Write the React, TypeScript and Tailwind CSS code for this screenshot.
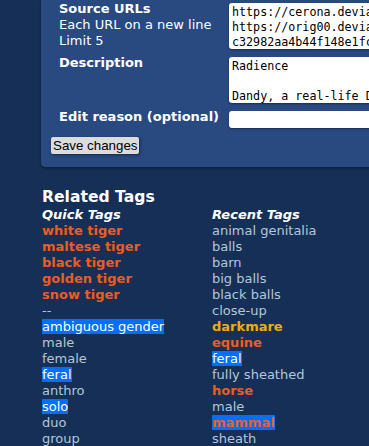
import React from "react";

type Tag = { name: string; kind: "general" | "species" | "artist"; sel?: boolean };

const quick: Tag[] = [
  { name: "white tiger", kind: "species" },
  { name: "maltese tiger", kind: "species" },
  { name: "black tiger", kind: "species" },
  { name: "golden tiger", kind: "species" },
  { name: "snow tiger", kind: "species" },
  { name: "--", kind: "general" },
  { name: "ambiguous gender", kind: "general", sel: true },
  { name: "male", kind: "general" },
  { name: "female", kind: "general" },
  { name: "feral", kind: "general", sel: true },
  { name: "anthro", kind: "general" },
  { name: "solo", kind: "general", sel: true },
  { name: "duo", kind: "general" },
  { name: "group", kind: "general" },
];

const recent: Tag[] = [
  { name: "animal genitalia", kind: "general" },
  { name: "balls", kind: "general" },
  { name: "barn", kind: "general" },
  { name: "big balls", kind: "general" },
  { name: "black balls", kind: "general" },
  { name: "close-up", kind: "general" },
  { name: "darkmare", kind: "artist" },
  { name: "equine", kind: "species" },
  { name: "feral", kind: "general", sel: true },
  { name: "fully sheathed", kind: "general" },
  { name: "horse", kind: "species" },
  { name: "male", kind: "general" },
  { name: "mammal", kind: "species", sel: true },
  { name: "sheath", kind: "general" },
];

function TagItem({ t }: { t: Tag }) {
  let cls = "";
  if (t.kind === "species") cls = "text-[#ed5d1f] font-bold";
  else if (t.kind === "artist") cls = "text-[#f2ac08] font-bold";
  else cls = t.sel ? "text-white" : "text-[#b4c7d9]";
  return (
    <div className="h-[16px] leading-[16px] whitespace-nowrap">
      <a className={`${cls} ${t.sel ? "bg-[#006ffa]" : ""} cursor-pointer`}>{t.name}</a>
    </div>
  );
}

const mono = "font-['DejaVu_Sans_Mono',monospace] text-[11.7px] leading-[15px]";

export default function App() {
  return (
    <div className="w-[369px] h-[446px] overflow-hidden bg-[#152f56] font-['DejaVu_Sans',Verdana,sans-serif] text-[13px] text-white">
      <div className="ml-[41px] w-[420px] bg-[#284a81] rounded-bl-[4px] shadow-[0_1px_3px_rgba(0,0,0,0.45)] pl-[10px] pt-[1px] pb-[11px]">
        <div className="flex items-start mb-[4px]">
          <div className="w-[178px] pl-[8px] leading-[16px]">
            <div className="font-bold">Source URLs</div>
            <div>Each URL on a new line</div>
            <div>Limit 5</div>
          </div>
          <div className="py-[2px]">
            <div className={`w-[200px] h-[46px] bg-white text-black rounded-[3px] shadow-[0_1px_2px_rgba(0,0,0,0.4)] px-[3px] pt-[2px] overflow-hidden whitespace-pre ${mono}`}>
              {"https://cerona.deviantart.com\nhttps://orig00.deviantart.net\nc32982aa4b44f148e1fc"}
            </div>
          </div>
        </div>
        <div className="flex items-start mb-[4px]">
          <div className="w-[178px] pl-[8px] leading-[16px] font-bold">Description</div>
          <div className="py-[2px]">
            <div className={`w-[200px] h-[46px] bg-white text-black rounded-[3px] shadow-[0_1px_2px_rgba(0,0,0,0.4)] px-[3px] pt-[2px] overflow-hidden whitespace-pre ${mono}`}>
              {"Radience\n\nDandy, a real-life Dandy"}
            </div>
          </div>
        </div>
        <div className="flex items-start">
          <div className="w-[178px] pl-[8px] leading-[16px] font-bold whitespace-nowrap">Edit reason (optional)</div>
          <div className="py-[2px]">
            <div className="w-[200px] h-[17px] bg-white rounded-[3px] shadow-[0_1px_2px_rgba(0,0,0,0.4)]" />
          </div>
        </div>
        <button className="mt-[7px] h-[17px] px-[2px] bg-[#dcdcdc] text-black rounded-[2px] shadow-[1px_1px_3px_rgba(0,0,0,0.5)] font-['Liberation_Sans',Arial,sans-serif] text-[13.33px] leading-[17px]">
          Save changes
        </button>
      </div>

      <div className="pl-[42px]">
        <div className="mt-[21px] h-[19px] leading-[19px] text-[15.6px] font-bold">Related Tags</div>
        <div className="flex">
          <div className="w-[170px]">
            <div className="h-[16px] leading-[16px] font-bold italic">Quick Tags</div>
            {quick.map((t, i) => (
              <TagItem key={i} t={t} />
            ))}
          </div>
          <div>
            <div className="h-[16px] leading-[16px] font-bold italic">Recent Tags</div>
            {recent.map((t, i) => (
              <TagItem key={i} t={t} />
            ))}
          </div>
        </div>
      </div>
    </div>
  );
}
